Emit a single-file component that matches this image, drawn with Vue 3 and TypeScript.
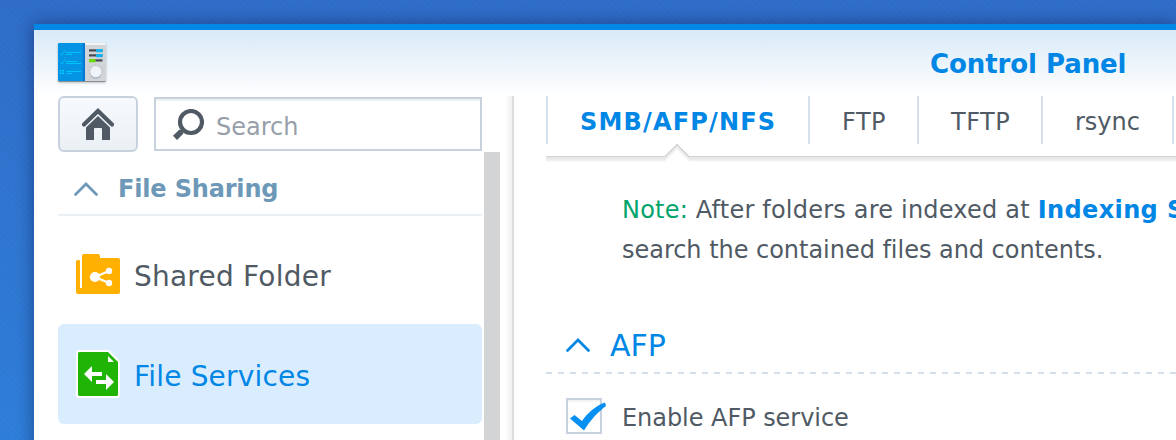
<script setup lang="ts">
interface Tab { label: string; width: number; active?: boolean; cls?: string }
const tabs: Tab[] = [
  { label: 'SMB/AFP/NFS', width: 262, active: true },
  { label: 'FTP', width: 109, cls: 'wide' },
  { label: 'TFTP', width: 124, cls: 'wide' },
  { label: 'rsync', width: 131 },
]
const sliders = [
  { y: 10, on: 40, colour: '#14b3f5' },
  { y: 15, on: 40, colour: '#14b3f5' },
  { y: 20, on: 33, colour: '#6cd90b' },
]
</script>

<template>
  <div class="desktop">
    <div class="window">
      <header class="titlebar">
        <svg class="app-icon" width="50" height="42" viewBox="0 0 50 42">
          <path d="M.5 38h47v1.700H.5z" fill="#777b80" />
          <path d="M1 1h26v38H1a1 1 0 0 1-1-1V2a1 1 0 0 1 1-1z" fill="#0593e3" />
          <path d="M27 1h20a1 1 0 0 1 1 1v36a1 1 0 0 1-1 1H27z" fill="#d2d5d8" />
          <path d="M27 1h20l1 2H27z" fill="#f2f5f7" />
          <path d="M25 1h2v38h-2z" fill="#0878d2" />
          <g stroke="#00c4f7" fill="none" stroke-width="1">
            <path d="M2.500 11.500l1.500 1.500 3-4.500M2.500 20.500l1.500 1.500 3-4.500M8 10.500h15M8 12.500h6.500M8 19.500h11M8 21.500h15M8 29.500h15M8 31.500h6.500" />
            <rect x="2.500" y="28.500" width="3" height="3" />
          </g>
          <g v-for="s in sliders" :key="s.y">
            <rect x="31" :y="s.y - 2.700" width="13.500" height="2.200" fill="#454b52" />
            <rect :x="s.on - 2" :y="s.y - 3" width="6.700" height="3.200" rx=".8" :fill="s.colour" />
          </g>
          <circle cx="37.800" cy="29.500" r="7" fill="none" stroke="#aeb5bc" stroke-width=".8" stroke-dasharray="1 2.200" />
          <circle cx="37.800" cy="31" r="5.500" fill="#a8b0b8" />
          <circle cx="37.800" cy="29.800" r="5.500" fill="#edf5fa" />
        </svg>
        <h1 class="title">Control Panel</h1>
      </header>
      <div class="body">
        <aside class="sidebar">
          <div class="tools">
            <button class="home" aria-label="Home">
              <svg width="32" height="34" viewBox="0 0 32 34">
                <path d="M2 17.500L16 4l14 13.500" fill="none" stroke="#505a64" stroke-width="4.200" stroke-linecap="round" />
                <path d="M4 20.500L16 9l12 11.500V33h-8V22a1 1 0 0 0-1-1h-6a1 1 0 0 0-1 1v11H4z" fill="#505a64" />
              </svg>
            </button>
            <div class="search">
              <svg width="32" height="32" viewBox="0 0 32 32">
                <circle cx="19" cy="13" r="11" fill="none" stroke="#505a64" stroke-width="4.200" />
                <path d="M11.500 20.500L8.500 23.500" fill="none" stroke="#505a64" stroke-width="3.500" />
                <path d="M9.500 22.500L3 28.800" fill="none" stroke="#505a64" stroke-width="5.800" />
              </svg>
              <span>Search</span>
            </div>
          </div>
          <div class="nav">
            <div class="tree">
              <div class="group">
                <svg width="24" height="14" viewBox="0 0 24 14"><path d="M1.500 12.500L12 2l10.500 10.500" fill="none" stroke="#6d98b8" stroke-width="2.700" stroke-linecap="round" /></svg>
                <span>File Sharing</span>
              </div>
              <div class="item shared">
                <svg width="44" height="46" viewBox="0 0 44 46">
                  <path d="M2 9h1a1 1 0 0 1 1 1v27h2V5a2 2 0 0 1 2-2h14a2 2 0 0 1 2 2v2h18a2 2 0 0 1 2 2v32a2 2 0 0 1-2 2H2a2 2 0 0 1-2-2V11a2 2 0 0 1 2-2z" fill="#ffb000" />
                  <path d="M33 20L19 26l14 6" fill="none" stroke="#fff" stroke-width="2.300" />
                  <g fill="#fff"><circle cx="19" cy="26" r="5.100" /><circle cx="33" cy="20" r="3.200" /><circle cx="33" cy="32" r="3.200" /></g>
                </svg>
                <span>Shared Folder</span>
              </div>
              <div class="item services">
                <svg width="44" height="48" viewBox="0 0 44 48">
                  <path d="M3 0h30l11 11v34a3 3 0 0 1-3 3H3a3 3 0 0 1-3-3V3a3 3 0 0 1 3-3z" fill="#fff" />
                  <path d="M3 2h29l10 10v33l-1 1H3l-1-1V3z" fill="#20b505" />
                  <path d="M32 6v6h6z" fill="#fff" />
                  <path d="M8 24l8-8v6h10v4H16v6zM38 32l-8-8v6H20v4h10v6z" fill="#fff" />
                </svg>
                <span>File Services</span>
              </div>
            </div>
            <div class="scrollbar"></div>
          </div>
        </aside>
        <div class="divider"></div>
        <main class="content">
          <nav class="tabs">
            <div v-for="t in tabs" :key="t.label" class="tab" :class="[t.cls, { active: t.active }]" :style="{ width: t.width + 'px' }"><span>{{ t.label }}</span></div>
            <div class="tab"></div>
          </nav>
          <svg class="rule" width="630" height="20" viewBox="0 0 630 20">
            <g fill="none" stroke="#000">
              <path d="M0 17.500H119L131 5.500l12 12H630" opacity=".025" />
              <path d="M0 16.500H119L131 4.500l12 12H630" opacity=".05" />
              <path d="M0 15.500H119L131 3.500l12 12H630" opacity=".07" />
              <path d="M0 14.500H119L131 2.500l12 12H630" opacity=".09" />
              <path d="M0 12.800H119L131 .8l12 12H630" stroke="#d2d2d2" stroke-width="1.600" />
            </g>
          </svg>
          <p class="note"><span class="first"><span class="green">Note:</span> After folders are indexed at <b>Indexing Service</b></span><br><span class="second">search the contained files and contents.</span></p>
          <div class="section">
            <svg width="24" height="14" viewBox="0 0 24 14"><path d="M1.500 12.500L12 2l10.500 10.500" fill="none" stroke="#0086e5" stroke-width="2.700" stroke-linecap="round" /></svg>
            <h2>AFP</h2>
          </div>
          <div class="dashes"></div>
          <div class="option">
            <div class="box">
              <svg width="40" height="36" viewBox="0 0 40 36"><path d="M3 18.500l4.500-3.500 7.500 6C20 13.500 29 5.500 38 2.500l1 3.500C31 12 23.500 20 17 30.500z" fill="#078ff2" /></svg>
            </div>
            <span>Enable AFP service</span>
          </div>
        </main>
      </div>
    </div>
  </div>
</template>

<style>
body { overflow: hidden; }
</style>
<style scoped>
* { box-sizing: border-box; }
.desktop {
  width: 1176px; height: 440px; padding: 24px 0 0 34px; overflow: hidden;
  background: repeating-linear-gradient(45deg, rgba(255,255,255,.015) 0 2px, transparent 2px 4px), linear-gradient(#2e6cc8, #2d7dd8);
  color: #505a64; font: 24px/40px Verdana, "DejaVu Sans", sans-serif;
}
.window { width: 1142px; height: 500px; background: #fff; border-top: 6px solid #0086e5; box-shadow: 0 0 16px rgba(0,0,40,.42); }
.titlebar { height: 66px; display: flex; padding: 12px 0 0 24px; background: linear-gradient(#d8eaf8, #fff); }
.app-icon { flex: none; filter: drop-shadow(0 1px 1px rgba(0,0,0,.25)); }
.title { margin: 0 0 0 822px; font-size: 26px; line-height: 45px; color: #0086e5; white-space: nowrap; letter-spacing: -.08px; }
.body { display: flex; height: 434px; }
.sidebar { width: 466px; padding-left: 24px; flex: none; }
.tools { display: flex; gap: 16px; height: 56px; }
.home { width: 80px; height: 56px; border: 2px solid #c8d2de; border-radius: 6px; background: linear-gradient(#f6faff, #ebf0f5); padding: 0; display: flex; align-items: center; justify-content: center; }
.home svg { margin-top: -1px; }
.search { width: 328px; height: 54px; margin-top: 1px; border: 2px solid #c8d2de; display: flex; align-items: center; padding-left: 16px; color: #969faa; box-shadow: inset 0 2px #edf2f5; }
.search svg { margin-top: 2px; }
.search span { margin: 5px 0 0 12px; }
.nav { display: flex; gap: 2px; }
.tree { width: 424px; }
.scrollbar { width: 16px; height: 388px; background: #d3d4d6; }
.group { height: 64px; border-bottom: 2px solid #ebf0f4; display: flex; align-items: center; padding: 11px 0 0 16px; gap: 20px; color: #6d98b8; font-weight: bold; letter-spacing: -.17px; }
.item { display: flex; align-items: center; height: 100px; padding-left: 18px; gap: 14px; font-size: 28px; border-radius: 6px; letter-spacing: .22px; }
.shared { height: 108px; padding-top: 12px; }
.shared svg { margin-top: -4px; }
.shared span { padding-top: 2px; }
.services { color: #0086e5; background: #d9edff; letter-spacing: .18px; }
.services span { padding-top: 6px; }
.divider { width: 14px; border-right: 2px solid #dcdedd; background: linear-gradient(90deg, #fff 45%, #eff0ef); }
.content { flex: 1; min-width: 0; padding-left: 32px; overflow: hidden; }
.tabs { display: flex; width: 640px; height: 48px; }
.tab { border-left: 2px solid #d4e0ec; flex: none; width: 10px; line-height: 52px; padding-left: 32px; white-space: nowrap; }
.wide { letter-spacing: .5px; }
.active { color: #0086e5; font-weight: bold; letter-spacing: 1.18px; }
.rule { display: block; }
.note { margin: 26px 0 0 76px; white-space: nowrap; }
.first { letter-spacing: .21px; }
.second { letter-spacing: -.03px; }
.green { color: #00a46c; }
.note b { color: #0086e5; letter-spacing: .38px; }
.section { display: flex; align-items: center; gap: 20px; height: 52px; margin-top: 50px; padding-left: 20px; color: #0086e5; }
.section svg { margin-top: -2px; }
.section h2 { margin: 0; font-size: 30px; font-weight: normal; }
.dashes { height: 2px; background: repeating-linear-gradient(90deg, #d4e0ec 0 6px, transparent 6px 12px); }
.option { display: flex; margin: 24px 0 0 20px; gap: 20px; white-space: nowrap; letter-spacing: -.05px; }
.box { width: 36px; height: 36px; border: 2px solid #c8d2de; box-shadow: inset 0 2px #f2f4f6; }
.box svg { display: block; overflow: visible; margin-left: -1px; }
</style>
